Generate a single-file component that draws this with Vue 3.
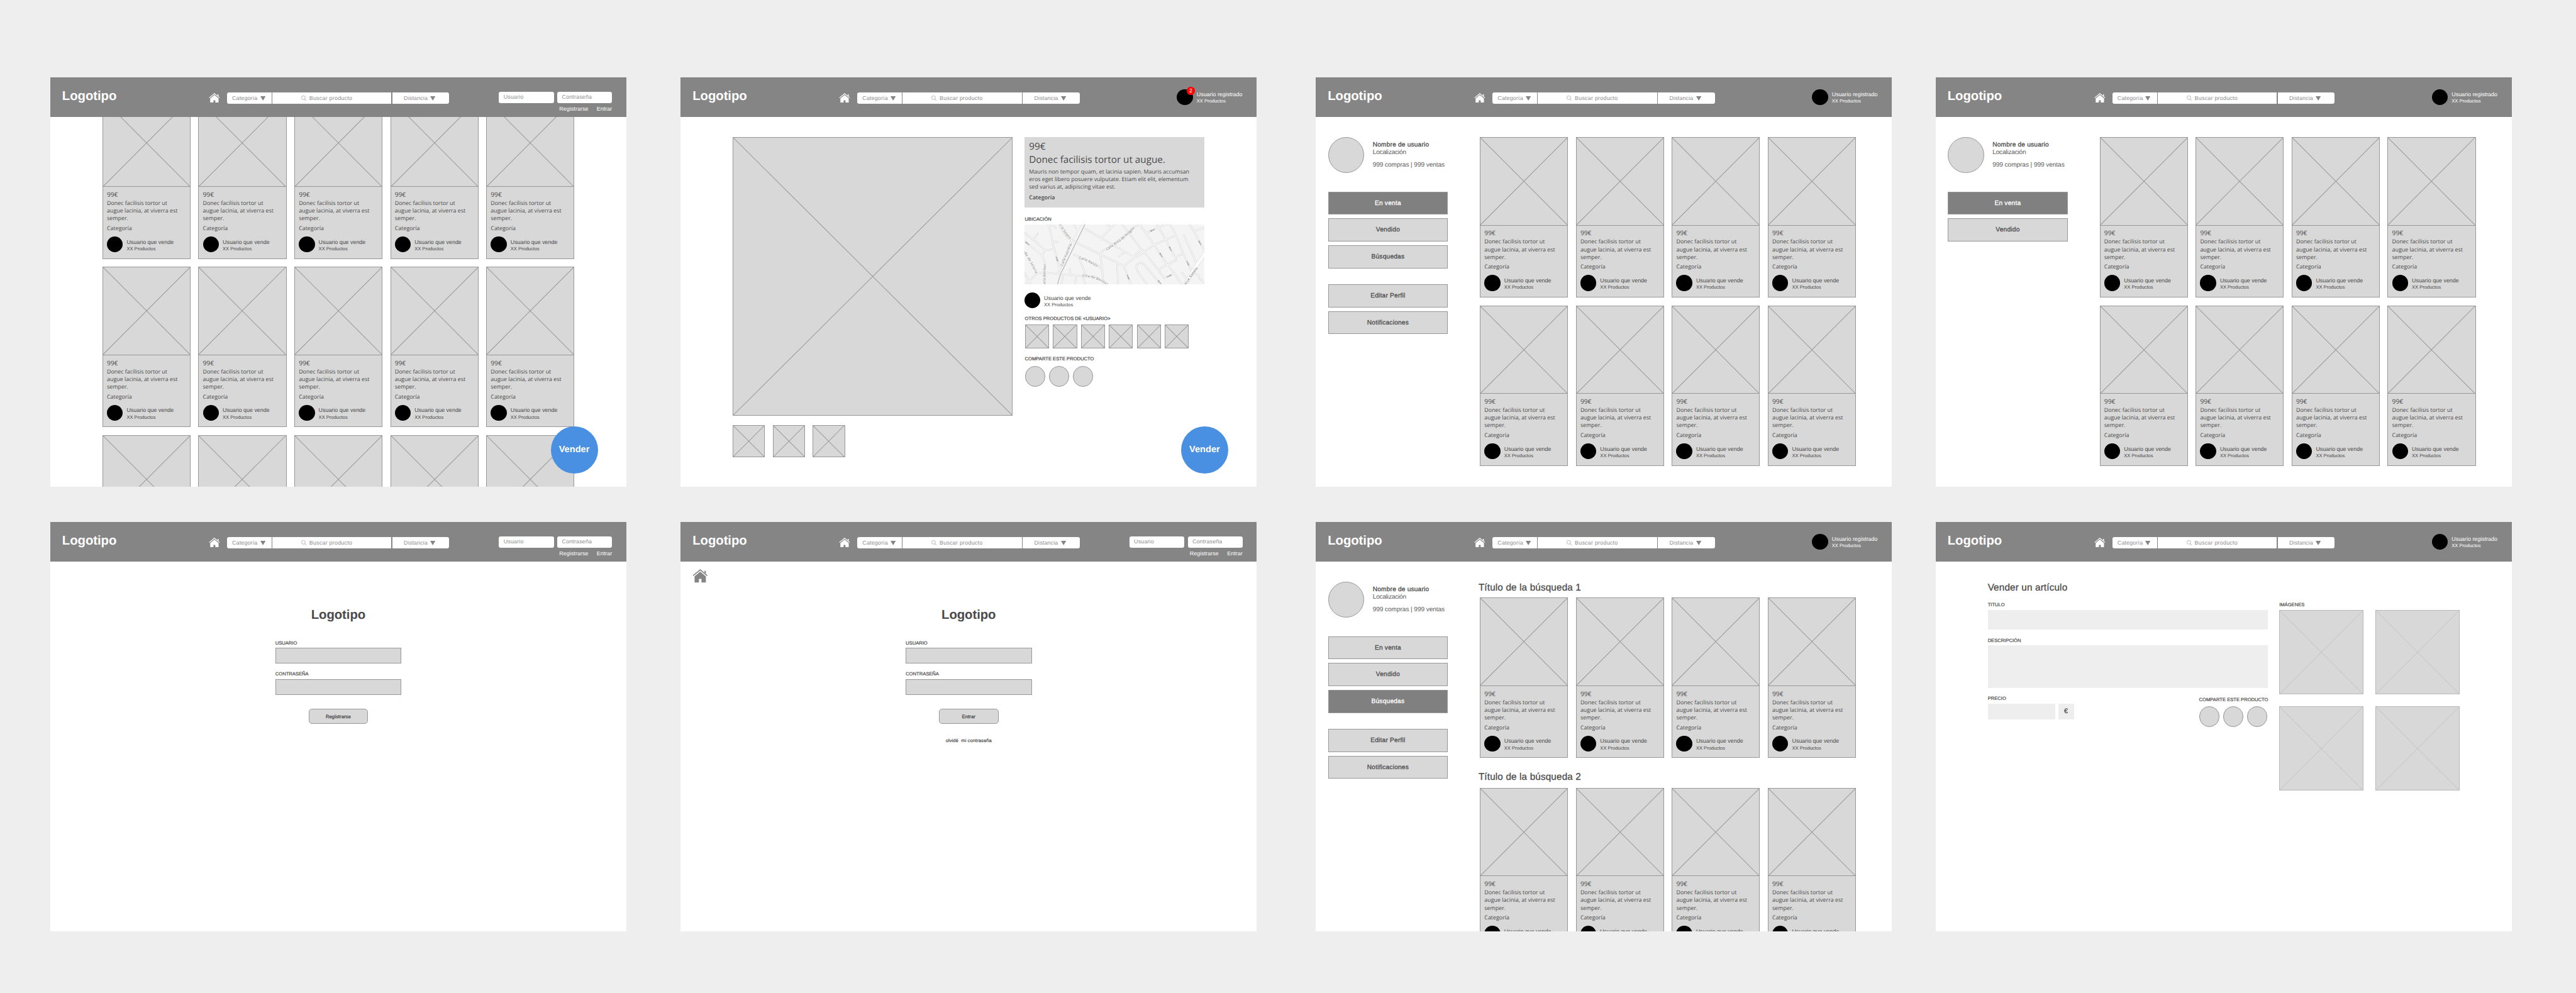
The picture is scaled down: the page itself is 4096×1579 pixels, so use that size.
<script setup>
const rows = [
  [
    { id: 'home', kind: 'home', login: true, sell: true },
    { id: 'detail', kind: 'detail', badge: 2, sell: true },
    { id: 'profile', kind: 'profile', active: 'En venta', full: true, lists: [{ count: 8 }] },
    { id: 'public', kind: 'profile', active: 'En venta', full: false, lists: [{ count: 8 }] },
  ],
  [
    { id: 'register', kind: 'auth', login: true, action: 'Registrarse' },
    { id: 'signin', kind: 'auth', login: true, action: 'Entrar', back: true },
    {
      id: 'searches', kind: 'profile', active: 'Búsquedas', full: true,
      lists: [
        { title: 'Título de la búsqueda 1', count: 4 },
        { title: 'Título de la búsqueda 2', count: 4 },
      ],
    },
    { id: 'sell', kind: 'sell' },
  ],
]

const menu = (full) =>
  full
    ? [['En venta', 'Vendido', 'Búsquedas'], ['Editar Perfil', 'Notificaciones']]
    : [['En venta', 'Vendido']]

const lists = (board) => (board.kind === 'home' ? [{ count: 15 }] : board.lists)

const roads = [
  'M0 66L84 131L175 211L240 203', 'M84 131L118 86', 'M0 128L149 251L175 211',
  'M190 10L203 31L229 148L240 203L284 352', 'M203 31L236 26L253 43', 'M229 150L265 147',
  'M149 251Q170 290 172 320L170 480', 'M18 470L52 443L110 383L180 380L265 390L284 352L372 136',
  'M10 368L52 443L74 480', 'M384 10L405 46', 'M270 0C300 70 340 120 372 136L588 243L713 305L762 327',
  'M478 53L594 120L772 222L850 267', 'M630 10L668 42L594 120', 'M668 42L705 12',
  'M730 257L772 222', 'M588 243Q595 215 625 207Q720 150 850 32L880 22L905 8',
  'M745 8L895 204L915 223L1020 357L1068 421L1144 385', 'M895 204L833 256',
  'M762 327L850 267L915 223L990 170L1078 132L1155 100', 'M762 327L822 480',
  'M713 305L720 480', 'M588 243L600 348L612 480', 'M390 245L430 262L560 320L600 352',
  'M428 278L480 400', 'M304 392L450 405L550 410L640 470', 'M297 480L304 392', 'M357 354L362 396',
  'M403 405L397 480', 'M455 408L480 480', 'M875 10L928 83L990 170L1090 320L1144 385L1206 480',
  'M928 83L1024 38L1095 12', 'M1010 10L1024 38L1078 132L1147 265L1158 284L1090 320L1020 357',
  'M1105 8L1155 100L1209 236L1276 378L1330 402L1326 418L1380 466', 'M1147 265L1209 236',
  'M1250 8L1289 68L1380 240', 'M1289 68L1380 38', 'M1215 99L1312 315',
  'M945 480L868 372Q848 335 866 316Q892 293 916 318L1052 480', 'M1202 380L1250 450',
]

// [x, y, angle] of each one-way arrow
const arrows = [
  [38, 159, 220], [262, 278, 72], [977, 62, 157], [1112, 200, 242], [1042, 246, 236],
  [1333, 155, 242], [1244, 310, 67], [796, 414, 67], [1104, 404, -25], [1031, 450, 230],
]

const streets = [
  { id: 's1', d: 'M280 16Q315 90 366 135', text: 'a la Solana', len: 136 },
  { id: 's2', d: 'M6 222Q60 295 100 385', text: 'alle de Solaire', len: 190 },
  { id: 's3', d: 'M172 490L178 312', text: 'María Benítez', len: 174 },
  { id: 's4', d: 'M304 330Q338 250 374 164', text: 'Calle Fuenfría', len: 178 },
  { id: 's5', d: 'M636 212Q770 130 852 36', text: 'Calle Brea de Aragón', len: 268 },
  { id: 's6', d: 'M426 273Q500 295 562 340', text: 'Calle Nalón', len: 148 },
  { id: 's7', d: 'M451 410Q540 406 638 474', text: 'Ctra de Benítez', len: 202 },
  { id: 's8', d: 'M1216 490L1320 344', text: 'Calvo Sotelo', len: 176, bold: true },
]
</script>

<template>
  <div class="canvas">
    <svg class="defs" width="0" height="0">
      <symbol id="i-home" viewBox="0 0 28 25">
        <path d="M1 12L14 1.3L27 12" fill="none" stroke="currentColor" stroke-width="1.9" />
        <path d="M3.6 13.2L14 4.7L24.4 13.2V25H16.3V18H11.6V25H3.6Z" fill="currentColor" />
        <path d="M21.8 3.2H24.4V8.4L21.8 6.2Z" fill="currentColor" />
      </symbol>
      <symbol id="i-search" viewBox="0 0 13 13">
        <circle cx="5.3" cy="5.2" r="4.7" fill="none" stroke="currentColor" />
        <path d="M8.5 8.7L12.5 12.6" stroke="currentColor" stroke-width="1.2" />
      </symbol>
      <symbol id="i-down" viewBox="0 0 13 11"><path d="M0 0H13L6.5 11Z" fill="currentColor" /></symbol>
    </svg>

    <div v-for="(row, r) in rows" :key="r" class="row">
      <section v-for="board in row" :key="board.id" class="board">
        <header class="top">
          <div class="logo">Logotipo</div>
          <svg class="house"><use href="#i-home" /></svg>
          <div class="search">
            <div class="seg cat"><span>Categoría</span><svg class="down"><use href="#i-down" /></svg></div>
            <div class="seg query"><svg class="lens"><use href="#i-search" /></svg><span>Buscar producto</span></div>
            <div class="seg dist"><span>Distancia</span><svg class="down"><use href="#i-down" /></svg></div>
          </div>
          <div v-if="board.login" class="login">
            <div class="fields"><div>Usuario</div><div>Contraseña</div></div>
            <div class="links"><span>Registrarse</span><span>Entrar</span></div>
          </div>
          <div v-else class="user account">
            <div class="avatar"><span v-if="board.badge" class="badge">{{ board.badge }}</span></div>
            <div class="who"><p>Usuario registrado</p><small>XX Productos</small></div>
          </div>
        </header>

        <main v-if="board.kind === 'home' || board.kind === 'profile'" :class="board.kind">
          <aside v-if="board.kind === 'profile'" class="side">
            <div class="profile-card">
              <div class="photo"></div>
              <div class="about">
                <p class="name med">Nombre de usuario</p>
                <p class="place">Localización</p>
                <p class="stats">999 compras | 999 ventas</p>
              </div>
            </div>
            <nav>
              <div v-for="(group, g) in menu(board.full)" :key="g" class="group">
                <div v-for="item in group" :key="item" class="item med" :class="{ active: item === board.active }">{{ item }}</div>
              </div>
            </nav>
          </aside>
          <div class="lists" :class="{ titled: board.id === 'searches' }">
            <div v-for="(list, l) in lists(board)" :key="l" class="list">
              <h2 v-if="list.title" class="med">{{ list.title }}</h2>
              <div class="grid" :class="board.kind === 'home' ? 'five' : 'four'">
                <article v-for="n in list.count" :key="n" class="card">
                  <div class="pic">
                    <svg class="cross" viewBox="0 0 100 100" preserveAspectRatio="none"><path d="M0 0L100 100M100 0L0 100" /></svg>
                  </div>
                  <div v-if="n <= 10" class="info">
                    <p class="price">99€</p>
                    <p class="desc">Donec facilisis tortor ut<br />augue lacinia, at viverra est<br />semper.</p>
                    <p class="category">Categoría</p>
                    <div class="user">
                      <div class="avatar"></div>
                      <div class="who"><p>Usuario que vende</p><small>XX Productos</small></div>
                    </div>
                  </div>
                </article>
              </div>
            </div>
          </div>
        </main>

        <main v-else-if="board.kind === 'detail'" class="detail">
          <div class="gallery">
            <div class="box large">
              <svg class="cross" viewBox="0 0 100 100" preserveAspectRatio="none"><path d="M0 0L100 100M100 0L0 100" /></svg>
            </div>
            <div class="thumbs">
              <div v-for="n in 3" :key="n" class="box">
                <svg class="cross" viewBox="0 0 100 100" preserveAspectRatio="none"><path d="M0 0L100 100M100 0L0 100" /></svg>
              </div>
            </div>
          </div>
          <div class="facts">
            <div class="panel">
              <p class="big">99€</p>
              <p class="big title">Donec facilisis tortor ut augue.</p>
              <p class="text">Mauris non tempor quam, et lacinia sapien. Mauris accumsan<br />eros eget libero posuere vulputate. Etiam elit elit, elementum<br />sed varius at, adipiscing vitae est.</p>
              <p class="strong">Categoría</p>
            </div>
            <p class="label place-label">UBICACIÓN</p>
            <svg class="map" viewBox="18 18 1353 450">
              <g class="rail">
                <path d="M472 16L300 366Q285 385 266 470" stroke="#b9b9b9" stroke-width="5" />
                <path d="M446 16L380 130" stroke="#dedede" stroke-width="3" />
              </g>
              <g class="edge"><path v-for="d in roads" :key="d" :d="d" /></g>
              <path d="M1210 490L1312 320L1376 232" fill="none" stroke="#d2d2d2" stroke-width="29" />
              <g class="lane"><path v-for="d in roads" :key="d" :d="d" /></g>
              <path d="M1210 490L1312 320L1376 232" fill="none" stroke="#fbfbfb" stroke-width="25" />
              <path d="M472 16L300 366Q285 385 266 470" fill="none" stroke="#b9b9b9" stroke-width="4" />
              <g v-for="(a, i) in arrows" :key="i" :transform="`translate(${a[0]} ${a[1]}) rotate(${a[2]})`">
                <path d="M-20 -3H6V-8L20 0L6 8V3H-20Z" fill="#a9a9a9" />
              </g>
              <g v-for="s in streets" :key="s.id">
                <path :id="s.id" :d="s.d" fill="none" />
                <text :class="{ heavy: s.bold }"><textPath :href="'#' + s.id" :textLength="s.len">{{ s.text }}</textPath></text>
              </g>
            </svg>
            <div class="user seller">
              <div class="avatar"></div>
              <div class="who"><p>Usuario que vende</p><small>XX Productos</small></div>
            </div>
            <p class="label">OTROS PRODUCTOS DE &lt;USUARIO&gt;</p>
            <div class="others">
              <div v-for="n in 6" :key="n" class="box">
                <svg class="cross" viewBox="0 0 100 100" preserveAspectRatio="none"><path d="M0 0L100 100M100 0L0 100" /></svg>
              </div>
            </div>
            <p class="label">COMPARTE ESTE PRODUCTO</p>
            <div class="dots"><i v-for="n in 3" :key="n"></i></div>
          </div>
        </main>

        <main v-else-if="board.kind === 'auth'" class="auth">
          <div class="back"><svg v-if="board.back"><use href="#i-home" /></svg></div>
          <form>
            <div class="logo">Logotipo</div>
            <label class="label">USUARIO</label>
            <div class="input"></div>
            <label class="label second">CONTRASEÑA</label>
            <div class="input"></div>
            <div class="button med">{{ board.action }}</div>
            <p v-if="board.back" class="forgot">olvidé&nbsp; mi contraseña</p>
          </form>
        </main>

        <main v-else class="sell">
          <h2 class="med">Vender un artículo</h2>
          <div class="columns">
            <div class="form">
              <p class="label">TITULO</p>
              <div class="area one"></div>
              <p class="label">DESCRIPCIÓN</p>
              <div class="area many"></div>
              <div class="bottom">
                <div>
                  <p class="label">PRECIO</p>
                  <div class="amount"><div class="area"></div><div class="area euro med">€</div></div>
                </div>
                <div class="sharing">
                  <p class="label">COMPARTE ESTE PRODUCTO</p>
                  <div class="dots"><i v-for="n in 3" :key="n"></i></div>
                </div>
              </div>
            </div>
            <div class="images">
              <p class="label">IMÁGENES</p>
              <div class="quad">
                <div v-for="n in 4" :key="n" class="box soft">
                  <svg class="cross" viewBox="0 0 100 100" preserveAspectRatio="none"><path d="M0 0L100 100M100 0L0 100" /></svg>
                </div>
              </div>
            </div>
          </div>
        </main>

        <div v-if="board.sell" class="vender">Vender</div>
      </section>
    </div>
  </div>
</template>

<style>
html, body { margin: 0; background: #eee; overflow: hidden; }
</style>

<style scoped>
.canvas {
  zoom: 0.635827;
  width: 6442px;
  height: 2483px;
  box-sizing: border-box;
  padding: 193px 0 0 126px;
  overflow: hidden;
  background: #eee;
  color: #4a4a4a;
  font-family: "Liberation Sans", Arial, sans-serif;
  font-size: 14px;
  text-rendering: geometricPrecision;
}
.canvas * { box-sizing: border-box; }
.defs { display: block; position: absolute; }
p, h2 { margin: 0; font-weight: 400; white-space: nowrap; }
svg { display: block; }
.med { -webkit-text-stroke: 0.45px currentColor; }

.row { display: flex; margin-bottom: 88px; }
.board { position: relative; width: 1440px; height: 1024px; flex: none; overflow: hidden; background: #fff; }
.board:nth-child(2) { margin-left: 136.5px; }
.board:nth-child(3) { margin-left: 148.5px; }
.board:nth-child(4) { margin-left: 110px; }

.top { position: relative; z-index: 2; display: flex; align-items: flex-start; height: 100px; background: #858585; color: #fff; }
.logo { font-weight: 700; font-size: 32px; line-height: 36px; letter-spacing: -0.1px; }
.top .logo { width: 366.5px; margin: 30.8px 0 0 29.5px; }
.house { width: 28px; height: 25px; margin-top: 39px; }
.search { display: flex; gap: 2px; width: 555.5px; height: 28px; margin: 38px 0 0 18px; color: #8e8e90; letter-spacing: 0.25px; }
.seg { display: flex; align-items: center; background: #fff; }
.cat { width: 111px; padding-left: 12.4px; border-radius: 5px 0 0 5px; }
.query { width: 298px; padding-left: 72.5px; gap: 7px; letter-spacing: 0.38px; }
.dist { flex: 1; padding-left: 29px; border-radius: 0 5px 5px 0; }
.down { width: 13px; height: 11px; margin: 2px 0 0 6.5px; color: #858585; }
.lens { width: 13px; height: 13px; }
.login { width: 283px; margin: 37px 0 0 124.5px; }
.fields { display: flex; gap: 9px; }
.fields div { width: 137px; height: 28px; padding-left: 11.5px; border-radius: 5px; background: #fff; color: #8e8e90; line-height: 28px; letter-spacing: 0.25px; }
.links { display: flex; justify-content: flex-end; gap: 21px; margin-top: 5.5px; line-height: 18px; letter-spacing: 0.1px; }

.user { display: flex; gap: 9.5px; }
.avatar { position: relative; width: 40px; height: 40px; flex: none; border-radius: 50%; background: #000; }
.who { padding-top: 6px; white-space: nowrap; }
.who p { line-height: 18px; }
.who small { display: block; margin-top: 1px; font-size: 12px; line-height: 14px; letter-spacing: -0.05px; }
.account { margin: 30px 0 0 243.3px; }
.account .who { padding-top: 5.2px; }
.badge { position: absolute; left: 25px; top: -5.5px; width: 20px; height: 20px; border-radius: 50%; background: #f00; color: #fff; font-size: 14px; line-height: 19px; text-align: center; }

.cross { width: 100%; height: 100%; }
.cross path { fill: none; stroke: #9a9a9a; stroke-width: 1.6px; vector-effect: non-scaling-stroke; }
.box { border: 1px solid #979797; background: #d8d8d8; }
.soft { border-color: #b9b9b9; }
.soft .cross path { stroke: #bbb; stroke-width: 1.2px; }

.home { margin: -46.5px 0 0 130px; }
.grid { display: grid; column-gap: 19.5px; row-gap: 20px; }
.five { grid-template-columns: repeat(5, 220.5px); }
.four { grid-template-columns: repeat(4, 220.5px); }
.card { height: 401px; border: 1px solid #979797; background: #d8d8d8; }
.pic { height: 219.5px; border-bottom: 1px solid #979797; }
.info { padding: 7.2px 0 0 9.8px; font-family: "Open Sans", sans-serif; }
.price { font-size: 16px; line-height: 22px; }
.desc { margin-top: 2px; line-height: 19.1px; }
.category { margin-top: 5.7px; line-height: 19px; }
.info .user { margin-top: 10.7px; font-family: "Liberation Sans", Arial, sans-serif; }

.profile { display: flex; padding: 49.5px 0 0 30px; }
.side { width: 300px; }
.profile-card { display: flex; height: 91px; gap: 21.5px; }
.photo { width: 90.5px; height: 90.5px; flex: none; border: 1px solid #979797; border-radius: 50%; background: #d8d8d8; }
.about { padding-top: 11.8px; font-size: 16px; line-height: 19px; }
.name { letter-spacing: 0.3px; }
.place { letter-spacing: -0.35px; }
.stats { margin-top: 11.7px; letter-spacing: -0.15px; }
.place, .stats { color: #5c5c5c; }
nav { display: flex; flex-direction: column; gap: 40.5px; margin-top: 46px; }
.group { display: flex; flex-direction: column; gap: 9.5px; }
.item { height: 57.5px; border: 1px solid #979797; background: #d8d8d8; font-size: 16px; line-height: 55.8px; letter-spacing: 0.35px; text-align: center; }
.active { background: #808080; color: #fff; }
.lists { margin-left: 80px; padding-top: 0.5px; }
.home .lists { margin: 0; padding: 0; }
h2 { font-size: 24px; line-height: 28px; letter-spacing: 0.25px; }
.titled h2 { margin: 1.5px 0 10.3px -3.5px; }
.titled .list + .list h2 { margin: 34.2px 0 12.6px -3.5px; }

.detail { display: flex; gap: 29px; padding: 50px 0 0 129.5px; }
.gallery { width: 700.5px; }
.large { height: 697px; }
.thumbs { display: flex; gap: 20px; margin-top: 22.8px; }
.thumbs .box { width: 80.4px; height: 80.4px; }
.facts { width: 451px; }
.panel { height: 176px; padding: 8.7px 0 0 12px; background: #d8d8d8; font-family: "Open Sans", sans-serif; }
.big { font-size: 24px; line-height: 30px; }
.title { margin-top: 3.5px; }
.text { margin-top: 4px; line-height: 19.1px; }
.strong { margin-top: 7.4px; font-weight: 600; line-height: 19px; }
.label { display: block; padding-top: 1px; margin-bottom: -1px; font-size: 12px; line-height: 14px; -webkit-text-stroke: 0.35px currentColor; }
.facts .label { margin-left: 1.5px; }
.facts .place-label { margin-top: 22.2px; }
.map { width: 451px; height: 150px; margin-top: 5.8px; background: #f4f4f4; overflow: hidden; }
.rail path, .edge path, .lane path { fill: none; stroke-linejoin: round; stroke-linecap: round; }
.edge path { stroke: #cfcfcf; stroke-width: 12px; }
.lane path { stroke: #fafafa; stroke-width: 7px; }
.map text { fill: #777; stroke: #f6f6f6; stroke-width: 4px; paint-order: stroke; font: 25px "Open Sans", sans-serif; }
.map .heavy { fill: #555; }
.seller { margin: 20px 0 19.6px; }
.others { display: flex; gap: 10px; margin: 7.2px 0 19.4px 2px; }
.others .box { width: 60px; height: 60px; }
.dots { display: flex; gap: 9px; margin: 11px 0 0 1.7px; }
.dots i { width: 51px; height: 51px; border: 1px solid #979797; border-radius: 50%; background: #d8d8d8; }

.back { height: 114.9px; padding: 18.8px 0 0 29.7px; color: #858585; }
.back svg { width: 39px; height: 34px; }
form { width: 315.7px; margin: 0 auto; }
form .logo { padding-top: 1px; margin-bottom: 44.9px; text-align: center; }
form .label { margin-left: 0.3px; }
form .second { margin-top: 19.4px; }
.input { height: 39.5px; margin-top: 4.8px; border: 1px solid #979797; background: #d8d8d8; }
.button { width: 149px; height: 39px; margin: 34.2px auto 0; border: 1px solid #979797; border-radius: 8px; background: #d8d8d8; font-size: 12px; line-height: 37px; letter-spacing: 0.15px; text-align: center; }
.forgot { margin-top: 34.8px; font-size: 12px; line-height: 14px; letter-spacing: 0.1px; text-align: center; -webkit-text-stroke: 0.3px currentColor; }

.sell { padding: 51.8px 0 0 130px; }
.columns { display: flex; gap: 28.6px; margin-top: 21.4px; }
.form { width: 700.4px; }
.area { background: #eee; }
.one { height: 50.2px; margin: 4.8px 0 19.9px; }
.many { height: 107px; margin: 4.9px 0 20px 0.5px; }
.bottom { display: flex; justify-content: space-between; }
.amount { display: flex; gap: 6.6px; margin: 5.3px 0 0 0.5px; }
.amount .area { width: 169px; height: 38.7px; }
.amount .euro { width: 39.4px; font-size: 17px; line-height: 38.7px; text-align: center; }
.sharing { width: 172px; padding-top: 1.8px; }
.sharing .dots { margin: 9.8px 0 0; }
.quad { display: grid; grid-template-columns: 211px 211px; grid-auto-rows: 211.4px; gap: 28.6px 29.3px; margin-top: 5.6px; }

.vender { position: absolute; z-index: 3; left: 1251px; top: 872.8px; width: 118px; height: 118px; border-radius: 50%; background: #4990e2; color: #fff; font-size: 23px; font-weight: 700; line-height: 117px; text-align: center; }
</style>
